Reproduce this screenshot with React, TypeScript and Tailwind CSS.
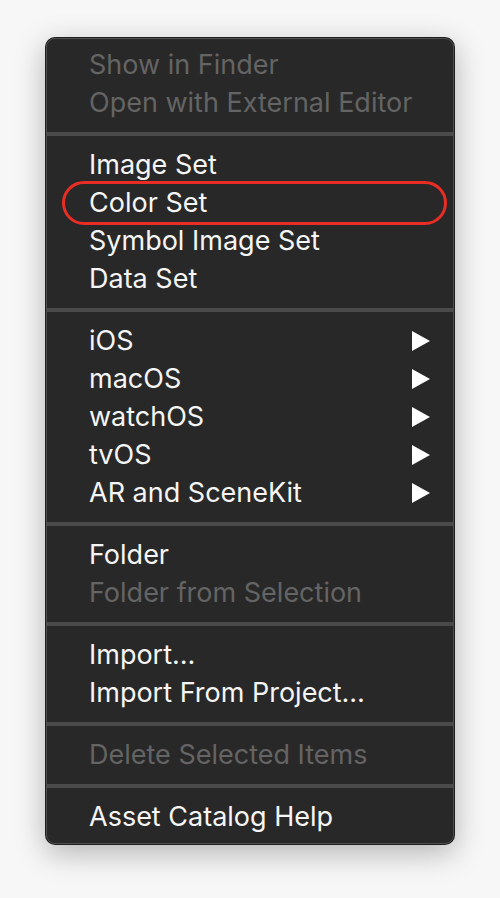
import React from "react";

type Item = { label: string; disabled?: boolean; sub?: boolean; circled?: boolean };

const groups: Item[][] = [
  [
    { label: "Show in Finder", disabled: true },
    { label: "Open with External Editor", disabled: true },
  ],
  [
    { label: "Image Set" },
    { label: "Color Set", circled: true },
    { label: "Symbol Image Set" },
    { label: "Data Set" },
  ],
  [
    { label: "iOS", sub: true },
    { label: "macOS", sub: true },
    { label: "watchOS", sub: true },
    { label: "tvOS", sub: true },
    { label: "AR and SceneKit", sub: true },
  ],
  [{ label: "Folder" }, { label: "Folder from Selection", disabled: true }],
  [{ label: "Import\u2026" }, { label: "Import From Project\u2026" }],
  [{ label: "Delete Selected Items", disabled: true }],
  [{ label: "Asset Catalog Help" }],
];

function Arrow() {
  return (
    <svg width="18" height="20" viewBox="0 0 18 20" className="shrink-0">
      <polygon points="0,0 18,10 0,20" fill="#ffffff" />
    </svg>
  );
}

export default function App() {
  return (
    <div
      className="w-[500px] h-[898px] bg-[#f7f7f7] pt-[37px] pl-[45px]"
      style={{ fontFamily: "Inter, 'Noto Sans', 'Liberation Sans', sans-serif" }}
    >
      <div className="w-[410px] rounded-[10px] bg-[#1e1e1e] p-px shadow-[0_8px_30px_rgba(0,0,0,0.28)]">
        <div className="rounded-[9px] border border-[#4e4e4e] bg-[#282828] pt-[7px] pb-[7px]">
          {groups.map((g, gi) => (
            <div key={gi}>
              {gi > 0 && <div className="h-[4px] bg-[#4a4a4a] mt-[10px] mb-[10px]" />}
              {g.map((it) => (
                <div key={it.label} className="relative h-[38px] flex items-center pl-[42px] pr-[23px]">
                  {it.circled && (
                    <div className="absolute left-[15px] right-[6px] top-[-3px] bottom-[-3px] rounded-full border-[3px] border-[#ea2d24]" />
                  )}
                  <span
                    className={
                      "flex-1 text-[27px] leading-none whitespace-nowrap pb-[2px] " +
                      (it.disabled ? "text-[#646464]" : "text-[#f5f5f5]")
                    }
                  >
                    {it.label}
                  </span>
                  {it.sub && <Arrow />}
                </div>
              ))}
            </div>
          ))}
        </div>
      </div>
    </div>
  );
}
